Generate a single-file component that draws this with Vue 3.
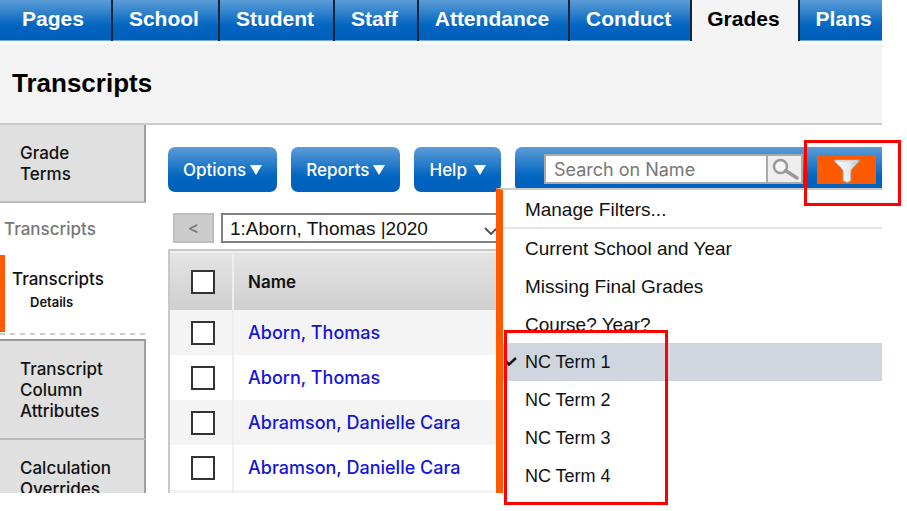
<script setup>
import { ref } from 'vue'

const tabs = ['Pages', 'School', 'Student', 'Staff', 'Attendance', 'Conduct', 'Grades', 'Plans']
const activeTab = 'Grades'
const menus = ['Options', 'Reports', 'Help']
const rows = ref([
  { name: 'Aborn, Thomas', checked: false },
  { name: 'Aborn, Thomas', checked: false },
  { name: 'Abramson, Danielle Cara', checked: false },
  { name: 'Abramson, Danielle Cara', checked: false }
])
const savedFilters = ['Current School and Year', 'Missing Final Grades', 'Course? Year?']
const termFilters = ['NC Term 1', 'NC Term 2', 'NC Term 3', 'NC Term 4']
const selected = ref('NC Term 1')
</script>

<template>
  <div class="page">
    <div class="frame">
      <nav class="tabs">
        <a
          v-for="tab in tabs"
          :key="tab"
          href="#"
          class="tab"
          :class="{ active: tab === activeTab }"
        >{{ tab }}</a>
      </nav>
      <header class="title"><h1>Transcripts</h1></header>

      <div class="body">
        <aside class="side">
          <a href="#" class="block">Grade<br>Terms</a>
          <a href="#" class="crumb">Transcripts</a>
          <a href="#" class="current">Transcripts<small>Details</small></a>
          <div class="dash"></div>
          <a href="#" class="block topped">Transcript<br>Column<br>Attributes</a>
          <a href="#" class="block">Calculation<br>Overrides</a>
        </aside>

        <main class="main">
          <div class="toolbar">
            <button v-for="m in menus" :key="m" type="button" class="btn" :class="{ roomy: m === 'Help' }">
              {{ m }}
              <svg width="12" height="10" viewBox="0 0 12 10" aria-hidden="true"><path d="M0 0h12L6 10z" fill="#fff" /></svg>
            </button>
            <div class="searchbar">
              <input class="search" type="text" placeholder="Search on Name" aria-label="Search on Name">
              <button type="button" class="find" aria-label="Search">
                <svg width="30" height="26" viewBox="0 0 30 26" aria-hidden="true">
                  <circle cx="9.500" cy="8.500" r="6.500" fill="#f4f4f4" stroke="#999" stroke-width="2.500" />
                  <path d="M14.500 12.500L26 20" stroke="#999" stroke-width="3.500" stroke-linecap="round" />
                </svg>
              </button>
              <button type="button" class="filter" aria-label="Filter">
                <svg width="28" height="26" viewBox="0 0 28 26" aria-hidden="true">
                  <defs>
                    <linearGradient id="funnel" x1="0" y1="0" x2="1" y2="0">
                      <stop offset="0" stop-color="#fff" />
                      <stop offset="0.600" stop-color="#e4e9ec" />
                      <stop offset="1" stop-color="#aab6bd" />
                    </linearGradient>
                  </defs>
                  <path d="M1 3H27C26 6 19 11 18 14V24Q14 27 10 24V14C9 11 2 6 1 3Z" fill="url(#funnel)" stroke="#a9947f" stroke-width="1" />
                  <path d="M3 4H25" stroke="#d5dde2" stroke-width="1.500" />
                </svg>
              </button>

              <div class="menu">
                <button type="button" class="item manage">Manage Filters...</button>
                <button v-for="f in savedFilters" :key="f" type="button" class="item">{{ f }}</button>
                <button
                  v-for="f in termFilters"
                  :key="f"
                  type="button"
                  class="item term"
                  :class="{ picked: f === selected }"
                  @click="selected = f"
                >
                  <svg v-if="f === selected" class="tick" width="12" height="11" viewBox="0 0 12 11" aria-hidden="true">
                    <path d="M1 5L4 8.500L11 2" fill="none" stroke="#111" stroke-width="2.500" />
                  </svg>
                  {{ f }}
                </button>
              </div>
            </div>
          </div>

          <div class="pager">
            <button type="button" class="prev" aria-label="Previous">&lt;</button>
            <div class="picker">
              <select aria-label="Student record">
                <option>1:Aborn, Thomas |2020</option>
              </select>
              <svg class="chev" width="14" height="8" viewBox="0 0 14 8" aria-hidden="true"><path d="M1 1l6 6 6-6" fill="none" stroke="#555" stroke-width="2" /></svg>
            </div>
          </div>

          <table class="grid">
            <thead>
              <tr>
                <th class="check"><input type="checkbox" aria-label="Select all"></th>
                <th>Name</th>
              </tr>
            </thead>
            <tbody>
              <tr v-for="(r, i) in rows" :key="i">
                <td class="check"><input v-model="r.checked" type="checkbox" :aria-label="'Select ' + r.name"></td>
                <td><a href="#">{{ r.name }}</a></td>
              </tr>
              <tr><td class="check"></td><td></td></tr>
            </tbody>
          </table>
        </main>
      </div>
    </div>

    <div class="mark mark-filter"></div>
    <div class="mark mark-terms"></div>
  </div>
</template>

<style>
body {
  background: #fff;
}
</style>

<style scoped>
* {
  box-sizing: border-box;
}
.page {
  position: relative;
  height: 100vh;
  padding: 0 25px 18px 0;
  overflow: hidden;
  font-family: Inter, "Liberation Sans", sans-serif;
  font-size: 17px;
  font-weight: 500;
  color: #111;
}
a {
  color: inherit;
  text-decoration: none;
}
button,
input,
select {
  margin: 0;
  font: inherit;
  color: inherit;
}
.frame {
  display: flex;
  flex-direction: column;
  height: 100%;
  overflow: hidden;
}

.tabs {
  display: flex;
  flex: none;
  height: 44px;
  overflow: hidden;
  font: bold 21px/38px "Liberation Sans", Arial, sans-serif;
}
.tab {
  flex: none;
  height: 41px;
  padding: 0 19px 0 16px;
  border-right: 2px solid #10243a;
  background: linear-gradient(#5b9dd7 0, #0265c0 62%, #0060bb 38px, #0060bb 40px, #6aaae0 40px);
  color: #fff;
}
.tab:first-child {
  padding: 0 27px 0 22px;
}
.tab:last-child {
  flex: 1;
  border-right: 0;
  border-left: 2px solid #10243a;
}
.tab.active {
  height: 44px;
  padding: 0 18px 0 15px;
  border-right: 0;
  background: #f4f4f4;
  color: #000;
}
.title {
  flex: none;
  height: 81px;
  padding: 0 12px;
  border-bottom: 2px solid #cbcbcb;
  background: #f4f4f4;
}
h1 {
  margin: 0;
  font: bold 26px/78px "Liberation Sans", Arial, sans-serif;
  color: #000;
}

.body {
  display: flex;
  flex: 1;
  min-height: 0;
}
.side {
  display: flex;
  flex: none;
  flex-direction: column;
  width: 146px;
  line-height: 21px;
}
.side > * {
  flex: none;
}
.block {
  padding: 18px 0 16px 20px;
  border-right: 2px solid #a0a0a0;
  border-bottom: 2px solid #bbb;
  background: #e0e0e0;
}
.topped {
  border-top: 2px solid #999;
}
.crumb {
  padding: 16px 4px 15px;
  color: #777;
}
.current {
  display: flex;
  flex-direction: column;
  height: 77px;
  padding: 14px 0 0 7px;
  border-left: 5px solid #ff5a00;
}
.current small {
  padding: 2px 0 0 18px;
  font-size: 13px;
  font-weight: 600;
}
.dash {
  height: 6px;
  margin-top: 1px;
  background: repeating-linear-gradient(90deg, #ccc 0 5px, transparent 5px 10px) 0 0 / 100% 2px no-repeat;
}

.main {
  flex: 1;
  min-width: 0;
  padding: 22px 0 0 22px;
}
.toolbar {
  display: flex;
  gap: 14px;
  height: 45px;
}
.btn {
  display: flex;
  flex: none;
  align-items: center;
  gap: 4px;
  padding: 0 15px;
  border: 0;
  border-radius: 7px;
  background: linear-gradient(#5b9dd7 0, #0265c0 65%, #0060bb);
  color: #fff;
}
.roomy {
  gap: 7px;
}
.searchbar {
  position: relative;
  display: flex;
  flex: 1;
  min-width: 0;
  padding: 7px 6px 8px 29px;
  border-radius: 7px 0 0 7px;
  background: linear-gradient(#5b9dd7 0, #0265c0 65%, #0060bb);
}
.search {
  flex: 1;
  min-width: 0;
  padding: 0 8px;
  border: 2px solid #aaa;
  border-right: 0;
  border-radius: 0;
  background: #fff;
  font-size: 18px;
  font-weight: 400;
}
.search::placeholder {
  color: #777;
  opacity: 1;
}
.find {
  width: 37px;
  padding: 2px 3px;
  border: 2px solid #aaa;
  background: #eee;
}
.find svg,
.filter svg {
  display: block;
}
.filter {
  width: 59px;
  margin: 2px 0 0 14px;
  padding: 1px 16px;
  border: 0;
  background: #ff5a00;
}

.menu {
  position: absolute;
  z-index: 2;
  top: 41px;
  right: 0;
  left: -19px;
  display: flex;
  flex-direction: column;
  border-top: 2px solid #ccc;
  border-left: 7px solid #ff5a00;
  background: #fff;
  font-family: "Liberation Sans", Arial, sans-serif;
  font-size: 19px;
  font-weight: 400;
}
.item {
  position: relative;
  height: 38px;
  padding: 1px 0 0 22px;
  border: 0;
  background: transparent;
  text-align: left;
}
.manage {
  height: 39px;
  padding-top: 3px;
  border-bottom: 2px solid #e4e4e4;
}
.term {
  font-size: 18px;
}
.picked {
  background: #d0d6e0;
}
.tick {
  position: absolute;
  top: 13px;
  left: 2px;
}

.pager {
  display: flex;
  gap: 7px;
  padding: 21px 0 6px 5px;
}
.prev {
  width: 41px;
  height: 30px;
  padding: 0;
  border: 2px solid #bdbdbd;
  background: #ccc;
  color: #777;
}
.picker {
  display: grid;
  align-items: center;
  width: 284px;
  height: 30px;
  font-family: "Liberation Sans", Arial, sans-serif;
  font-size: 19px;
  font-weight: 400;
}
.picker > * {
  grid-area: 1 / 1;
}
.picker select {
  width: 100%;
  height: 30px;
  padding: 0 7px;
  border: 2px solid #808080;
  border-radius: 0;
  background: #fff;
  appearance: none;
}
.chev {
  justify-self: end;
  margin: 6px 7px 0 0;
  pointer-events: none;
}

.grid {
  width: 100%;
  border: 2px solid #c8c8c8;
  border-collapse: separate;
  border-spacing: 0;
}
th,
td {
  height: 45px;
  padding: 0 14px;
  text-align: left;
}
th {
  height: 59px;
  border-top: 2px solid #f0f0f0;
  background: linear-gradient(#e4e4e4, #cfcfcf);
  font-weight: 600;
}
.check {
  width: 64px;
  padding: 0 0 0 21px;
  border-right: 2px solid #eee;
}
td {
  font-size: 18px;
  color: #1414dc;
}
tbody tr:nth-child(odd) {
  background: #f4f4f4;
}
.check input {
  display: block;
  width: 24px;
  height: 24px;
  border: 2px solid #333;
  background: #fff;
  appearance: none;
}

.mark {
  position: absolute;
  z-index: 3;
  border: 3px solid #f00;
  pointer-events: none;
}
.mark-filter {
  top: 140px;
  right: 6px;
  width: 97px;
  height: 66px;
}
.mark-terms {
  top: 330px;
  left: 504px;
  width: 164px;
  height: 175px;
}
</style>
